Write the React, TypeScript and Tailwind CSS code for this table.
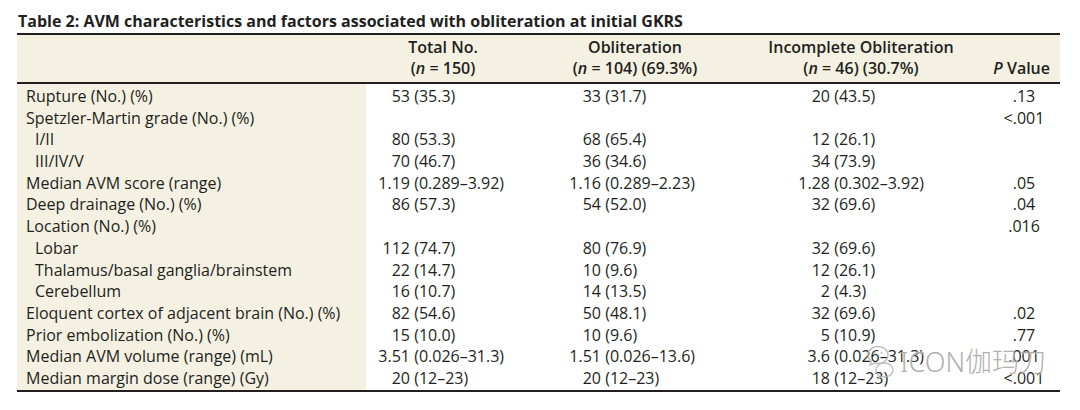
import React from 'react';

// Table 2 — AVM characteristics, reproduced as a journal-style table.

type Row = {
  label: string;
  sub?: boolean;
  total?: [string, string];
  obl?: [string, string];
  inc?: [string, string];
  p?: string;
};

const rows: Row[] = [
  { label: 'Rupture (No.) (%)', total: ['53', '(35.3)'], obl: ['33', '(31.7)'], inc: ['20', '(43.5)'], p: '.13' },
  { label: 'Spetzler-Martin grade (No.) (%)', p: '<.001' },
  { label: 'I/II', sub: true, total: ['80', '(53.3)'], obl: ['68', '(65.4)'], inc: ['12', '(26.1)'] },
  { label: 'III/IV/V', sub: true, total: ['70', '(46.7)'], obl: ['36', '(34.6)'], inc: ['34', '(73.9)'] },
  { label: 'Median AVM score (range)', total: ['1.19', '(0.289–3.92)'], obl: ['1.16', '(0.289–2.23)'], inc: ['1.28', '(0.302–3.92)'], p: '.05' },
  { label: 'Deep drainage (No.) (%)', total: ['86', '(57.3)'], obl: ['54', '(52.0)'], inc: ['32', '(69.6)'], p: '.04' },
  { label: 'Location (No.) (%)', p: '.016' },
  { label: 'Lobar', sub: true, total: ['112', '(74.7)'], obl: ['80', '(76.9)'], inc: ['32', '(69.6)'] },
  { label: 'Thalamus/basal ganglia/brainstem', sub: true, total: ['22', '(14.7)'], obl: ['10', '(9.6)'], inc: ['12', '(26.1)'] },
  { label: 'Cerebellum', sub: true, total: ['16', '(10.7)'], obl: ['14', '(13.5)'], inc: ['2', '(4.3)'] },
  { label: 'Eloquent cortex of adjacent brain (No.) (%)', total: ['82', '(54.6)'], obl: ['50', '(48.1)'], inc: ['32', '(69.6)'], p: '.02' },
  { label: 'Prior embolization (No.) (%)', total: ['15', '(10.0)'], obl: ['10', '(9.6)'], inc: ['5', '(10.9)'], p: '.77' },
  { label: 'Median AVM volume (range) (mL)', total: ['3.51', '(0.026–31.3)'], obl: ['1.51', '(0.026–13.6)'], inc: ['3.6', '(0.026–31.3)'], p: '.001' },
  { label: 'Median margin dose (range) (Gy)', total: ['20', '(12–23)'], obl: ['20', '(12–23)'], inc: ['18', '(12–23)'], p: '<.001' },
];

function Val({ v, w }: { v?: [string, string]; w: string }) {
  if (!v) return <div />;
  return (
    <div className="flex whitespace-nowrap">
      <span className={`${w} text-right shrink-0`}>{v[0]}</span>
      <span>&nbsp;{v[1]}</span>
    </div>
  );
}

function WeChatMark() {
  return (
    <svg width="30" height="38" viewBox="0 0 30 38" fill="none" stroke="#b8b8b8" strokeWidth="1.4">
      <path d="M4 12c0-5 4.5-8.5 10-8.5s10 3.5 10 8.5-4.5 8.5-10 8.5c-1.3 0-2.5-.2-3.6-.5L6 22l1.2-3.6C5.2 16.8 4 14.5 4 12z" />
      <path d="M12 27c0-4 3.8-7 8.5-7s8.5 3 8.5 7-3.8 7-8.5 7c-1 0-2-.1-2.9-.4L14 35.5l.9-3C13 31.2 12 29.2 12 27z" />
      <circle cx="10.5" cy="10" r="1" fill="#b8b8b8" stroke="none" />
      <circle cx="17.5" cy="10" r="1" fill="#b8b8b8" stroke="none" />
    </svg>
  );
}

export default function App() {
  return (
    <div className="relative w-[1080px] h-[410px] bg-white text-[#231f20] font-['Open_Sans','Liberation_Sans',sans-serif] overflow-hidden">
      <div className="ml-[17px] w-[1043px]">
        <div className="h-[33px] pt-[11px] pl-[1px] text-[16px] leading-[21px] font-bold whitespace-nowrap">
          Table 2: AVM characteristics and factors associated with obliteration at initial GKRS
        </div>
        <div className="h-[2px] bg-[#231f20]" />

        {/* header band */}
        <div className="bg-[#f4f0e2] pt-[2px] pb-[3px] grid grid-cols-[349px_154px_230px_222px_88px] text-[16px] leading-[21px] font-semibold">
          <div />
          <div className="text-center">
            <div>Total No.</div>
            <div>(<i>n</i> = 150)</div>
          </div>
          <div className="text-center">
            <div>Obliteration</div>
            <div>(<i>n</i> = 104) (69.3%)</div>
          </div>
          <div className="text-center">
            <div>Incomplete Obliteration</div>
            <div>(<i>n</i> = 46) (30.7%)</div>
          </div>
          <div className="flex items-end justify-end pr-[10px]">
            <span><i>P</i> Value</span>
          </div>
        </div>
        <div className="h-[2px] bg-[#231f20]" />

        {/* body */}
        <div className="flex text-[16px] leading-[21.7px]">
          <div className="w-[349px] shrink-0 bg-[#f4f0e2] pt-[2px]">
            {rows.map((r) => (
              <div key={r.label} className={`h-[21.7px] whitespace-nowrap ${r.sub ? 'pl-[18px]' : 'pl-[9px]'}`}>
                {r.label}
              </div>
            ))}
          </div>
          <div className="flex-1 pt-[2px]">
            {rows.map((r) => (
              <div key={r.label} className="h-[21.7px] grid grid-cols-[154px_230px_222px_88px]">
                <Val v={r.total} w="w-[44px]" />
                <Val v={r.obl} w="w-[81px]" />
                <Val v={r.inc} w="w-[80px]" />
                <div className="pl-[16px] text-center">{r.p}</div>
              </div>
            ))}
          </div>
        </div>
        <div className="h-[2px] bg-[#231f20]" />
      </div>

      {/* watermark */}
      <div className="absolute left-[864px] top-[343px] flex items-center gap-[6px] opacity-90 pointer-events-none">
        <WeChatMark />
        <span className="text-[27px] leading-[30px] font-light text-[#a9a9a9] [text-shadow:0_0_2px_#fff] font-['Noto_Sans','Noto_Sans_CJK_SC',sans-serif]">
          ICON伽玛刀
        </span>
      </div>
    </div>
  );
}
